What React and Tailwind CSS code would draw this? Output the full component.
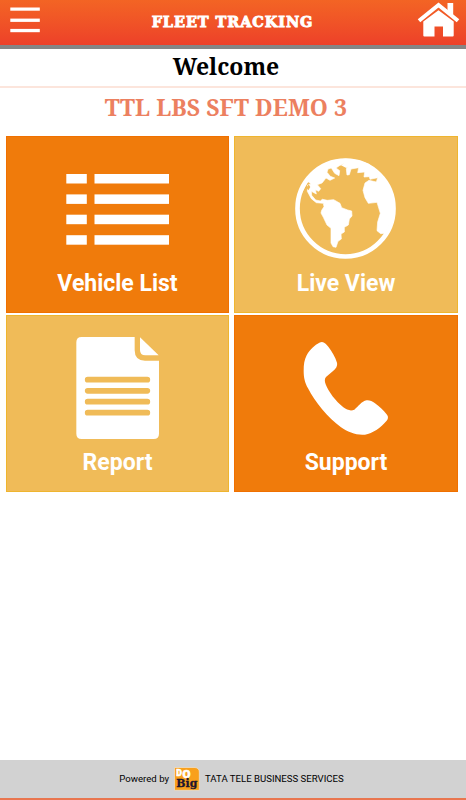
const tiles = [
  { label: 'Vehicle List', Icon: ListIcon, tone: 'bg-[#f07b0b] border-[#f07000]' },
  { label: 'Live View', Icon: GlobeIcon, tone: 'bg-[#f0bb58] border-[#efb52f]' },
  { label: 'Report', Icon: ReportIcon, tone: 'bg-[#f0bb58] border-[#efb52f]' },
  { label: 'Support', Icon: PhoneIcon, tone: 'bg-[#f07b0b] border-[#f07000]' },
];

function MenuIcon() {
  return (
    <svg width="30" height="27" viewBox="0 0 30 27" fill="#fff">
      <rect x="0.3" y="0.5" width="29.5" height="3.2" />
      <rect x="0.3" y="11.6" width="29.5" height="3.3" />
      <rect x="0.3" y="21.9" width="29.5" height="3.3" />
    </svg>
  );
}

function HomeIcon() {
  return (
    <svg width="44" height="37" viewBox="0 0 44 37" fill="#fff">
      <path d="M6.300 20.500L21.500 9.200l15.200 11.300v14q0 1-1 1H26V25.500h-8.500v10H7.300q-1 0-1-1z" />
      <path d="M2 19.700L21.500 4l19.500 15.700" fill="none" stroke="#fff" strokeWidth="4" />
      <path d="M30.500 2h5.700v13.200L30.500 10.500z" />
    </svg>
  );
}

function ListIcon() {
  return (
    <svg width="120" height="115" viewBox="0 0 120 115" fill="#fff">
      {[24, 44.4, 64.700, 85.200].map((y) => (
        <g key={y}>
          <rect x="8.300" y={y} width="20.500" height="9.500" />
          <rect x="36.500" y={y} width="74.500" height="9.500" />
        </g>
      ))}
    </svg>
  );
}

function GlobeIcon() {
  return (
    <svg className="-ml-[2px]" width="120" height="115" viewBox="0 0 360 345" fill="#fff">
      <circle cx="181.500" cy="175.500" r="144" fill="none" stroke="#fff" strokeWidth="14" />
      <path d="M45 138C60 90 85 62 119 46C135 36 160 30 182 27L200 29L208 38L222 33L250 42L280 66L304 97L320 130L327 164L324 203L300 250L287 251L276 242L278 216L286 190L276 157L250 160L240 143L234 121L240 99L252 91L274 96L278 83L255 88L253 80L237 81L239 66L218 68L221 53L198 57L193 74L186 75L184 57L190 44L176 41L163 47L153 54L164 62L162 77L149 70L139 54L129 57L126 67L136 79L149 84L135 91L123 84L111 99L97 104L107 116L101 124L91 119L94 132L79 124L80 136L92 150L106 153L112 148L127 151L146 149L165 160L170 173L188 180L200 183L201 198L193 207L190 225L178 232L178 246L168 252L169 267L159 274L153 292L144 290L138 279L138 235L126 225L115 202L108 189L110 181L117 170L115 160L94 158L79 146L67 124L68 105L78 102L68 94Z" strokeLinejoin="round" stroke="#fff" strokeWidth="2" />
      <path d="M184 37L195 44L184 54L168 46Z" />
      <path d="M71 103L64 113L70 121L76 111Z" fill="#f0bb58" />
    </svg>
  );
}

function ReportIcon() {
  return (
    <svg className="-mt-[4px] ml-[4px]" width="120" height="125" viewBox="0 0 360 375" fill="#fff">
      <path d="M65 36H224V76Q224 107 255 107H297V326Q297 342 281 342H65Q49 342 49 326V52Q49 36 65 36Z" />
      <path d="M240 37L296 91H256Q240 91 240 75Z" />
      {[164, 197.500, 230, 263].map((y) => (
        <path key={y} d={`M83 ${y}H262`} stroke="#f0bb58" strokeWidth="17" strokeLinecap="round" />
      ))}
    </svg>
  );
}

function PhoneIcon() {
  return (
    <svg className="mt-px -ml-[2px]" width="110" height="115" viewBox="0 0 330 345" fill="#fff">
      <path d="M96 36C103 36 109 43 115 50C126 64 136 81 141 98C143 108 137 117 130 122L108 141C103 147 104 155 107 163C116 186 137 214 160 232C171 240 182 244 193 239C205 230 214 214 230 211C238 210 247 214 255 220C268 229 281 241 291 254C296 260 294 267 290 272C272 293 248 310 225 314C201 317 173 306 153 292C113 263 75 216 54 175C44 157 41 142 41 122C41 104 43 89 50 76C59 59 75 44 88 38Q92 36 96 36Z" />
    </svg>
  );
}

function DoBigLogo() {
  return (
    <svg width="26" height="24" viewBox="0 0 26 24">
      <path d="M.5 .5H21Q25.300 1 25.300 5V23.300H.5Z" fill="#f9a01b" stroke="#eee3d2" strokeWidth=".7" />
      <text x="2.300" y="8.800" fontSize="8.800" fill="#fff" stroke="#fff" strokeWidth=".5" fontFamily="Roboto, sans-serif" fontWeight="900">D</text>
      <text x="8.500" y="10.800" fontSize="11.500" fill="#fff" stroke="#fff" strokeWidth=".6" fontFamily="Roboto, sans-serif" fontWeight="900">O</text>
      <text x="2.300" y="20" fontSize="11" fill="#20152f" stroke="#20152f" strokeWidth=".3" fontFamily="'DejaVu Serif', serif" fontWeight="700" textLength="21" lengthAdjust="spacingAndGlyphs">Big</text>
    </svg>
  );
}

export default function App() {
  return (
    <div className="flex h-[800px] w-[466px] flex-col overflow-hidden bg-white font-[Roboto,sans-serif]">
      <header className="flex h-[49px] shrink-0 items-start justify-between border-b-4 border-[#858585] bg-linear-to-b from-[#f36424] to-[#ed4029] pr-[5px] pl-[10px]">
        <div className="w-[38px] pt-[7px]"><MenuIcon /></div>
        <h1 className="flex h-[44px] w-[170px] items-center justify-center font-['DejaVu_Serif',serif] text-[14.5px] font-bold tracking-[0.9px] whitespace-nowrap text-white [-webkit-text-stroke:0.9px_white]">
          FLEET TRACKING
        </h1>
        <div className="pt-px"><HomeIcon /></div>
      </header>
      <div className="flex h-[39px] shrink-0 items-center justify-center border-b-2 border-[#fce5dc] pr-[14px] pb-[2px] font-['Noto_Serif','Droid_Serif','DejaVu_Serif_Condensed','DejaVu_Serif',serif] text-[23px] leading-none font-bold text-black">
        Welcome
      </div>
      <div className="flex h-[48px] shrink-0 items-start justify-center pt-[8px] pr-[14px] font-['Noto_Serif','Droid_Serif','DejaVu_Serif_Condensed','DejaVu_Serif',serif] text-[23px] leading-none font-bold tracking-[0.07px] whitespace-nowrap text-[#ec8060]">
        TTL LBS SFT DEMO 3
      </div>
      <main className="grid shrink-0 grid-cols-[223px_224px] gap-x-[5px] gap-y-[2px] pl-[6px]">
        {tiles.map(({ label, Icon, tone }) => (
          <section key={label} className={`flex h-[177px] flex-col items-center border pt-[13px] ${tone}`}>
            <div className="flex h-[116px] items-start justify-center"><Icon /></div>
            <h2 className="mt-[4px] text-[23px] leading-[28px] font-bold text-white">{label}</h2>
          </section>
        ))}
      </main>
      <footer className="mt-auto flex h-[40px] shrink-0 items-center justify-center gap-[5px] border-b-2 border-[#e9764f] bg-[#d2d2d2] pr-[3px] text-[9.6px] whitespace-nowrap text-black">
        <span>Powered by</span>
        <div className="-mt-px"><DoBigLogo /></div>
        <span>TATA TELE BUSINESS SERVICES</span>
      </footer>
    </div>
  );
}
